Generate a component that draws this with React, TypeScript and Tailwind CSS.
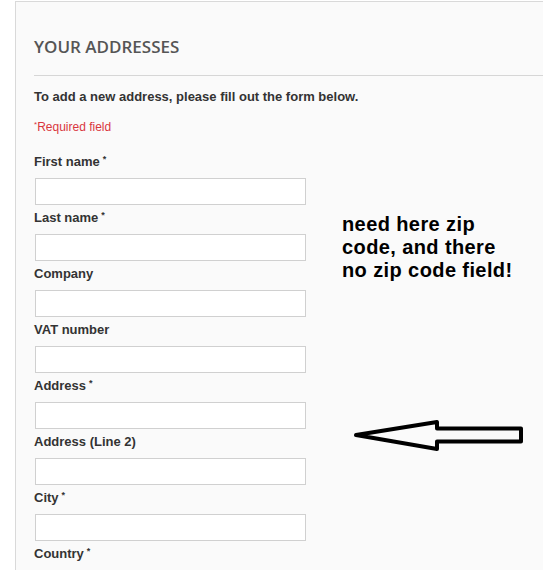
import React from 'react';

const fields: { label: string; required?: boolean }[] = [
    { label: 'First name', required: true },
    { label: 'Last name', required: true },
    { label: 'Company' },
    { label: 'VAT number' },
    { label: 'Address', required: true },
    { label: 'Address (Line 2)' },
    { label: 'City', required: true },
    { label: 'Country', required: true },
];

const App: React.FC = () => (
    <div className="relative w-[543px] h-[570px] overflow-hidden bg-white font-['Liberation_Sans',Arial,sans-serif]">
        <div className="ml-[15px] mt-[1px] h-[569px] border-t border-l border-[#d9d9d9] bg-[#fafafa] pl-[18px]">
            <h1 className="pt-[35px] pb-[18px] border-b border-[#d6d6d6] font-['Open_Sans',sans-serif] font-semibold text-[17px] leading-[20px] text-[#555555]">
                YOUR ADDRESSES
            </h1>
            <p className="mt-[12px] text-[13px] leading-[18px] font-bold text-[#333333]">
                To add a new address, please fill out the form below.
            </p>
            <p className="mt-[13px] text-[12px] leading-[16px] text-[#d9363e]">
                <sup className="text-[8px]">*</sup>Required field
            </p>
            <div className="mt-[19px] flex flex-col">
                {fields.map((f, i) => (
                    <div key={f.label} className={i === 0 ? '' : 'mt-[5px]'}>
                        <label className="block text-[13px] leading-[16px] font-bold text-[#333333]">
                            {f.label}
                            {f.required && <sup className="text-[9px] font-bold ml-[3px]">*</sup>}
                        </label>
                        <div className="mt-[8px] ml-[1px] w-[271px] h-[27px] border border-[#d0d0d0] bg-white" />
                    </div>
                ))}
            </div>
        </div>

        {/* annotation drawn over the screenshot */}
        <div className="absolute left-[342px] top-[213px] text-[20px] leading-[23px] tracking-[0.4px] font-bold text-black">
            need here zip
            <br />
            code, and there
            <br />
            no zip code field!
        </div>
        <svg className="absolute left-0 top-0" width="543" height="570" viewBox="0 0 543 570">
            <path
                d="M356 435 L437 422 L437 428.5 L521 428.5 L521 441.5 L437 441.5 L437 449 Z"
                fill="none"
                stroke="#000"
                strokeWidth="4"
                strokeLinejoin="round"
            />
        </svg>
    </div>
);

export default App;
